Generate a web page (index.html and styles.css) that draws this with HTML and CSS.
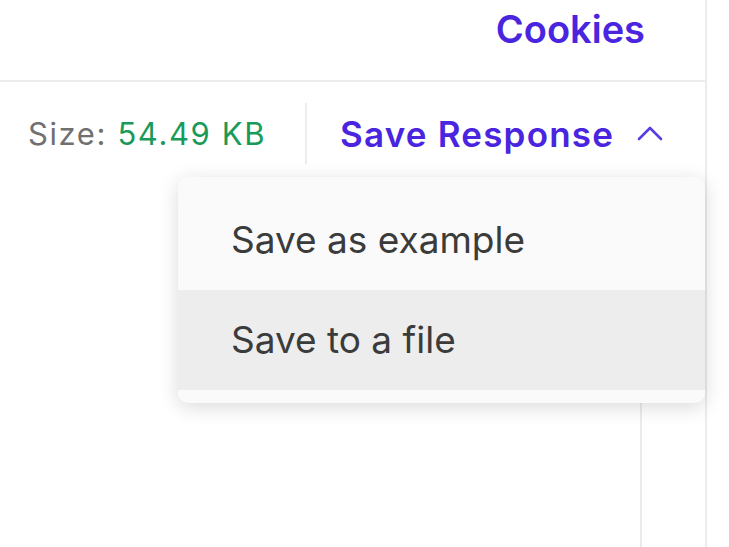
FILE: index.html
```html
<!doctype html>
<html>
<head>
    <title>Response</title>
    <link rel="stylesheet" href="styles.css">
</head>
<body>

<div class="pane">
    <div class="top_bar">
        <a class="link cookies">Cookies</a>
    </div>

    <div class="response_bar">
        <div class="meta">
            <span class="meta_label">Size:</span>
            <span class="meta_value">54.49 KB</span>
        </div>
        <div class="divider"></div>
        <a class="link save_btn">
            <span>Save Response</span>
            <svg class="chevron" width="28" height="16" viewBox="0 0 28 16">
                <path d="M3 14 L14 3 L25 14" fill="none" stroke="currentColor" stroke-width="2.6" stroke-linecap="round" stroke-linejoin="round"/>
            </svg>
        </a>
    </div>

    <div class="response_body">
        <div class="body_main"></div>
        <div class="body_side"></div>
    </div>

    <div class="save_menu">
        <div class="menu_item">Save as example</div>
        <div class="menu_item active">Save to a file</div>
    </div>
</div>

</body>
</html>
```

FILE: styles.css
```css
body {
    background: white;
    margin: 0;
    height: 547px;
    overflow: hidden;
    font-family: Inter, "Noto Sans", sans-serif;
}

.pane {
    position: relative;
    width: 705px;
    height: 547px;
    border-right: 2px solid #ececec;
    display: flex;
    flex-direction: column;
}

.link {
    color: #4a25e0;
    font-weight: 600;
    text-decoration: none;
    cursor: pointer;
}

.top_bar {
    height: 80px;
    border-bottom: 2px solid #ededed;
    display: flex;
    justify-content: flex-end;
    align-items: flex-start;
    padding-right: 60px;
}
.cookies {
    font-size: 38px;
    line-height: 58px;
}

.response_bar {
    height: 103px;
    display: flex;
    align-items: center;
    padding-left: 28px;
}
.meta {
    font-size: 31px;
    letter-spacing: 1.6px;
    width: 277px;
    white-space: nowrap;
}
.meta_label {
    color: #707070;
}
.meta_value {
    color: #1a9a5a;
}
.divider {
    width: 2px;
    height: 61px;
    background: #ededed;
}
.save_btn {
    font-size: 35px;
    letter-spacing: 1.2px;
    margin-left: 33px;
    display: flex;
    align-items: center;
    gap: 22px;
}
.chevron {
    color: #5a3ce6;
    margin-top: -2px;
}

.response_body {
    flex: 1;
    display: flex;
}
.body_main {
    width: 640px;
    border-right: 2px solid #ebebeb;
}

.save_menu {
    position: absolute;
    top: 177px;
    left: 178px;
    width: 527px;
    padding: 13px 0;
    background: #fafafa;
    border-radius: 10px;
    box-shadow: 0 4px 20px rgba(0, 0, 0, 0.15);
}
.menu_item {
    height: 100px;
    line-height: 100px;
    padding-left: 53px;
    font-size: 37px;
    color: #3b3b3b;
}
.menu_item.active {
    background: #ededed;
}
```
